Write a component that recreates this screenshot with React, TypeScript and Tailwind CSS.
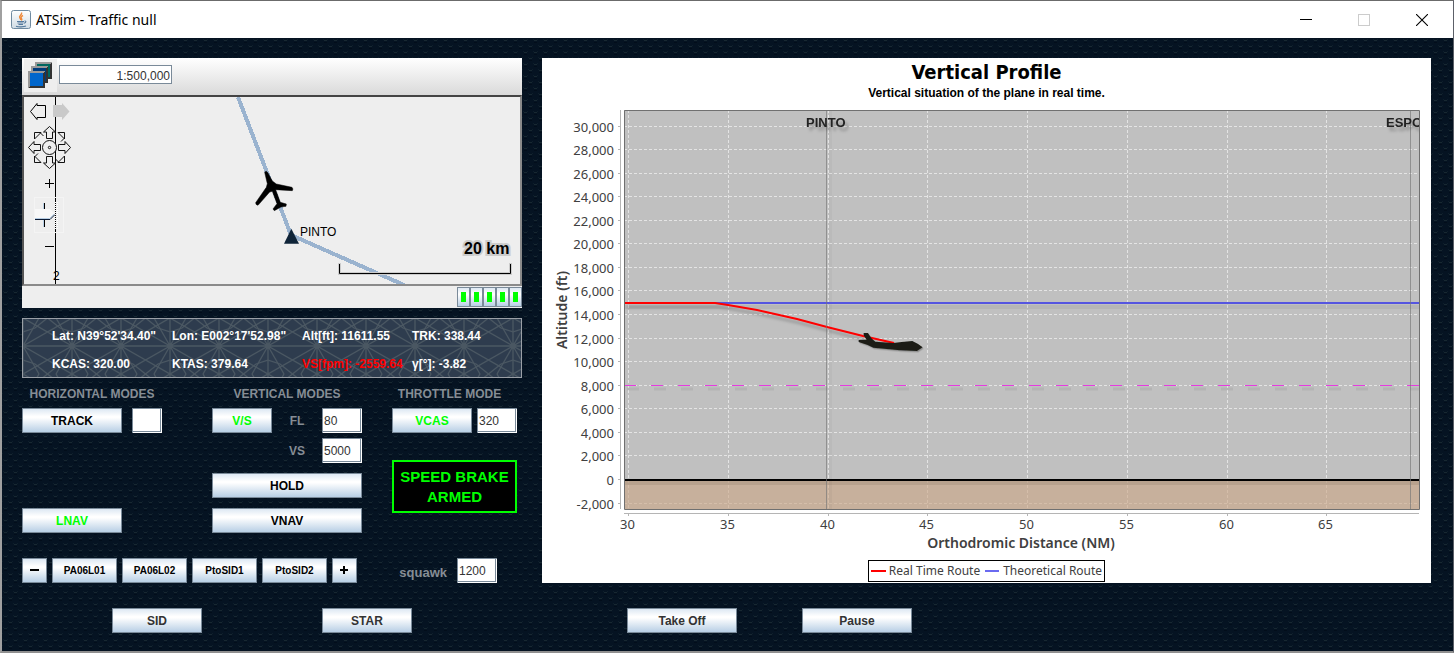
import React from "react";

const SANS = "'Noto Sans','DejaVu Sans Condensed',sans-serif";
const ARIAL = "'Liberation Sans',Arial,sans-serif";

function Texture() {
  return (
    <svg className="absolute inset-0 h-full w-full" aria-hidden="true">
      <defs>
        <pattern id="weave" width="10" height="12" patternUnits="userSpaceOnUse">
          <rect width="10" height="12" fill="#051322" />
          <path d="M1 2.5h1m3 0h1M6 8.5h1m3 0h1M0 8.5h1" stroke="#0d1e2b" />
          <path d="M2 3.5h3M7 9.5h3" stroke="#182831" />
          <path d="M2 5.5h3M7 11.5h3" stroke="#020d1a" />
        </pattern>
      </defs>
      <rect width="100%" height="100%" fill="url(#weave)" />
    </svg>
  );
}

function JavaIcon() {
  return (
    <svg width="20" height="20" viewBox="0 0 20 20" aria-hidden="true">
      <defs>
        <linearGradient id="javaBg" x1="0" y1="0" x2="0" y2="1">
          <stop offset="0" stopColor="#ffffff" />
          <stop offset="1" stopColor="#cfdbe4" />
        </linearGradient>
      </defs>
      <rect x="0.5" y="0.5" width="19" height="18" rx="2" fill="url(#javaBg)" stroke="#6f8aa0" />
      <path d="M10.500 2.500c1.200 2.200-3 3.400-1.800 5.200.5.8 1 1.200 1 2.300M12 5.500c-2 1-2.400 2-1.400 3.200.5.6.3 1.100-.3 1.800" fill="none" stroke="#ee8a3c" strokeWidth="1.400" />
      <path d="M6 11.500h7M6.500 13h6M7.500 14.500h4.500M13.500 11c2-.4 1.800 1.700-.5 2.200M5 16.300c2 .8 8 .8 10-.2" fill="none" stroke="#54799c" strokeWidth="1.100" />
    </svg>
  );
}

function TitleBar() {
  const control = "flex h-full w-[58px] items-center justify-center";
  return (
    <header className="relative flex h-[37px] items-center bg-white pl-[9px] pr-[2px]">
      <JavaIcon />
      <h1 className="ml-[5px] font-['Noto_Sans',sans-serif] text-[14px] leading-5 text-black">ATSim - Traffic null</h1>
      <div className="ml-auto flex h-full">
        <button type="button" aria-label="Minimize" className={control}>
          <svg width="12" height="12"><path d="M0 5.500h12" stroke="#000" /></svg>
        </button>
        <button type="button" aria-label="Maximize" disabled className={control}>
          <svg width="12" height="12"><rect x="0.5" y="0.5" width="11" height="11" fill="none" stroke="#ccc" /></svg>
        </button>
        <button type="button" aria-label="Close" className={control}>
          <svg width="12" height="12"><path d="M0 0l12 12M12 0L0 12" stroke="#000" strokeWidth="1.100" /></svg>
        </button>
      </div>
    </header>
  );
}

function Button({ className = "", children, ...rest }: React.ButtonHTMLAttributes<HTMLButtonElement>) {
  return (
    <button
      type="button"
      className={`h-[25px] border border-[#7a8a99] bg-[linear-gradient(180deg,#dde8f3_0%,#ffffff_32%,#ffffff_38%,#b8cfe5_100%)] text-center font-bold ${className}`}
      {...rest}
    >
      {children}
    </button>
  );
}

const fieldStyle =
  "h-[25px] border-l border-t border-[#7a8a99] bg-white px-px text-[12px] text-[#333] shadow-[inset_-1px_-1px_0_#fff,inset_-2px_-2px_0_#7a8a99] outline-none";

function Field({ id, label, value, className = "" }: { id?: string; label?: string; value: string; className?: string }) {
  return <input id={id} aria-label={label} defaultValue={value} className={`${fieldStyle} ${className}`} />;
}

function PanWheel() {
  const arrow = "M0 -21L6 -15.500H3V-9H-3V-15.500H-6Z";
  const corner = "M-15 -8.500V-15H-8.500ZM-9 -14.500L-6 -11.500";
  return (
    <g transform="translate(49.500 147.500)" fill="none" stroke="#111">
      {[0, 90, 180, 270].map((r) => (
        <g key={r} transform={`rotate(${r})`}>
          <path d={corner} />
          <path d={arrow} fill="#eee" />
        </g>
      ))}
      <circle r="7" fill="#eee" />
      <circle r="1.200" />
    </g>
  );
}

function MapCanvas() {
  return (
    <svg viewBox="24 97 496 187" className="block h-auto w-full bg-[#eee]" role="img" aria-label="Map of the route">
      <path d="M238 97L291 235L404 285" fill="none" stroke="#9ab3cf" strokeWidth="4" shapeRendering="crispEdges" />
      <path d="M55.500 97V284" stroke="#000" />
      <text x="53" y="280" fontFamily={ARIAL} fontSize="12">2</text>
      <path d="M30.500 111.500L37 103.500V105.500H45.500V117.500H37V119.500Z" fill="#eee" stroke="#000" />
      <path d="M53 105H62V103L69.500 111.500L62 120V117H53Z" fill="#c9c9c9" />
      <PanWheel />
      <path d="M45 183.500h9M49.500 179v9M45 246.500h9" stroke="#000" />
      <rect x="34.500" y="197.500" width="29" height="35" fill="none" stroke="#f4f4f4" />
      <path d="M43.500 203v24" stroke="#b8cfe5" />
      <path d="M44.500 203v24" stroke="#000" />
      <path d="M35 209H50L55 214L50 219H35Z" fill="#f8f8f8" />
      <path d="M35 218.500H49.500L54 214" fill="none" stroke="#b8cfe5" />
      <path d="M35 219.500H50L55 214.500" fill="none" stroke="#0b1a33" />
      <path d="M55.500 202V229M57.500 202V229" stroke="#fff" strokeDasharray="1 1" />
      <g transform="translate(220 90) scale(0.33333)">
        <path d="M134 247Q139 240 144 249L157 273L169 282L216 292Q221 297 217 302L167 299L181 337L199 342L198 349L183 351L163 362L159 357L171 341L157 304L149 306L114 346Q106 344 107 338L139 292L142 281Z" fill="#000" stroke="#000" strokeWidth="1.500" />
        <path d="M214 416L237 461H192Z" fill="#0f2438" />
      </g>
      <text x="300" y="236" fontFamily={ARIAL} fontSize="12">PINTO</text>
      <path d="M339.500 263V273.500H510.500V263" fill="none" stroke="#ccc" strokeWidth="3" />
      <path d="M339.500 264V273.500H510.500V264" fill="none" stroke="#000" />
      <text x="464" y="254" fontFamily={ARIAL} fontSize="16" fontWeight="bold" stroke="#ccc" strokeWidth="4" paintOrder="stroke">20 km</text>
    </svg>
  );
}

function MapPanel() {
  return (
    <section className="bg-[#eee]">
      <div className="flex h-[37px] items-start bg-[linear-gradient(180deg,#fff,#dadada)] pl-[2px] pt-px">
        <button type="button" aria-label="Layers" className="flex h-[33px] w-[33px] items-center justify-center bg-[#eee]">
          <svg width="27" height="27" viewBox="0 0 27 27" shapeRendering="crispEdges">
            {[
              [8, 0, "#00675f"],
              [4, 4, "#003b7a"],
              [1, 9, "#0066cc"],
            ].map(([x, y, c]) => (
              <g key={String(c)} transform={`translate(${x} ${y})`}>
                <rect width="17" height="17" fill="#333" />
                <path d="M0 0H17L15 2H2V15L0 17Z" fill="#999" />
                <rect x="2" y="2" width="13" height="13" fill={String(c)} />
              </g>
            ))}
          </svg>
        </button>
        <input
          aria-label="Scale"
          defaultValue="1:500,000"
          className="ml-[2px] mt-[6px] h-[19px] w-[113px] border border-[#7a8a99] bg-white pt-[2px] pr-px text-right text-[12px] text-[#333] outline-none"
        />
      </div>
      <div className="border-2 border-b-[#8a8a8a] border-l-[#555] border-r-[#8a8a8a] border-t-[#444]">
        <MapCanvas />
      </div>
      <div className="flex h-[22px] items-center justify-end">
        {[0, 1, 2, 3, 4].map((i) => (
          <span key={i} className="flex h-5 w-[13px] items-center justify-center border border-[#7a8a99] bg-[linear-gradient(180deg,#dde8f3,#fff_35%,#b8cfe5)]">
            <span className="h-[10px] w-[5px] bg-[#00ff00]" />
          </span>
        ))}
      </div>
    </section>
  );
}

function StarPattern() {
  return (
    <svg className="absolute inset-0 h-full w-full" aria-hidden="true">
      <defs>
        <pattern id="stars" width="49" height="56" patternUnits="userSpaceOnUse" y="-1">
          <rect width="49" height="56" fill="#2e3c4e" />
          <g stroke="#4a5762" strokeWidth="1.300" fill="none">
            <path d="M0 28H49M0 0V56M49 0V56M0 28L49 0M0 28L49 56M49 28L0 0M49 28L0 56M0 28L16 0M0 28L16 56M49 28L33 0M49 28L33 56M0 28L24.500 14L49 28L24.500 42ZM0 0L24.500 14L49 0M0 56L24.500 42L49 56" />
            <path d="M0 14L12 10L24.500 0L37 10L49 14M0 42L12 46L24.500 56L37 46L49 42" />
            <circle cx="0" cy="28" r="2" fill="#4a5762" />
            <circle cx="49" cy="28" r="2" fill="#4a5762" />
          </g>
        </pattern>
      </defs>
      <rect width="100%" height="100%" fill="url(#stars)" />
    </svg>
  );
}

function FlightData() {
  return (
    <section className="relative mt-[10px] h-[60px] border border-[#9a9fa6]">
      <StarPattern />
      <div className="relative grid grid-cols-[120px_130px_110px_1fr] pl-[29px] pt-[3px] text-[12px] font-bold leading-[28px] whitespace-nowrap text-white">
        <span>Lat: N39°52'34.40"</span>
        <span>Lon: E002°17'52.98"</span>
        <span>Alt[ft]: 11611.55</span>
        <span>TRK: 338.44</span>
        <span>KCAS: 320.00</span>
        <span>KTAS: 379.64</span>
        <span className="text-[#ff0000]">VS[fpm]: -2559.64</span>
        <span>γ[°]: -3.82</span>
      </div>
    </section>
  );
}

function Modes() {
  const heading = "pt-[2px] text-center text-[12px] font-bold leading-7 text-[#868d95]";
  const caption = "flex-1 text-center text-[12px] font-bold text-[#868d95]";
  return (
    <section className="grid grid-cols-[190px_180px_1fr]">
      <div className="flex w-[140px] flex-col">
        <h2 className={heading}>HORIZONTAL MODES</h2>
        <div className="flex gap-[10px]">
          <Button className="w-[100px] text-[12px] text-black">TRACK</Button>
          <Field label="Track" value="" className="w-[30px]" />
        </div>
        <Button className="mt-auto w-[100px] text-[12px] text-[#00ff00]">LNAV</Button>
      </div>
      <div className="flex w-[150px] flex-col">
        <h2 className={heading}>VERTICAL MODES</h2>
        <div className="flex items-center">
          <Button className="w-[60px] text-[12px] text-[#00ff00]">V/S</Button>
          <label htmlFor="fl" className={caption}>FL</label>
          <Field id="fl" value="80" className="w-10" />
        </div>
        <div className="mt-[5px] flex items-center pl-[60px]">
          <label htmlFor="vs" className={caption}>VS</label>
          <Field id="vs" value="5000" className="w-10" />
        </div>
        <Button className="mt-[10px] text-[12px] text-black">HOLD</Button>
        <Button className="mt-[10px] text-[12px] text-black">VNAV</Button>
      </div>
      <div className="w-[125px]">
        <h2 className={`${heading} pr-[10px]`}>THROTTLE MODE</h2>
        <div className="flex gap-[5px]">
          <Button className="w-20 text-[12px] text-[#00ff00]">VCAS</Button>
          <Field label="VCAS" value="320" className="w-10" />
        </div>
        <p className="mt-[27px] border-2 border-[#00ff00] bg-black pt-[5px] pb-1 text-center text-[15px] font-bold leading-5 whitespace-nowrap text-[#00ff00]">
          SPEED BRAKE
          <br />
          ARMED
        </p>
      </div>
    </section>
  );
}

function Procedures() {
  return (
    <div className="mt-[25px] flex items-center gap-[5px]">
      <Button aria-label="Previous" className="w-[25px] text-black">
        <svg className="mx-auto" width="9" height="9"><path d="M0 4h9" stroke="#000" strokeWidth="2" /></svg>
      </Button>
      {["PA06L01", "PA06L02", "PtoSID1", "PtoSID2"].map((n) => (
        <Button key={n} className="w-[65px] text-[10px] text-black">{n}</Button>
      ))}
      <Button aria-label="Next" className="w-[25px] text-black">
        <svg className="mx-auto" width="9" height="9"><path d="M0 4h8M4 0v8" stroke="#000" strokeWidth="2" /></svg>
      </Button>
      <label htmlFor="squawk" className="ml-auto pt-[5px] pr-[5px] text-[13px] font-bold leading-5 text-[#868d95]">squawk</label>
      <Field id="squawk" value="1200" className="mr-[25px] w-10" />
    </div>
  );
}

const LEFT = 624;
const RIGHT = 1419;
const TOP = 110;
const BOTTOM = 509;
const yOf = (alt: number) => Math.round(480 - (alt * 353.5) / 30000) - 0.5;
const xOf = (nm: number) => Math.round(628 + (nm - 30) * 19.95) + 0.5;
const altitudes = Array.from({ length: 17 }, (_, i) => -2000 + i * 2000);
const distances = [30, 35, 40, 45, 50, 55, 60, 65];

function ProfileChart() {
  return (
    <svg viewBox="542 101 889 454" className="block h-auto w-full" role="img" aria-label="Altitude against distance" fontFamily={SANS}>
      <defs>
        <clipPath id="plot"><rect x={LEFT} y={TOP} width={RIGHT - LEFT} height={BOTTOM - TOP} /></clipPath>
        <filter id="soft" x="-5%" y="-50%" width="110%" height="250%">
          <feDropShadow dx="3" dy="4" stdDeviation="1.500" floodColor="#000" floodOpacity="0.25" />
        </filter>
      </defs>
      <rect x={LEFT} y={TOP} width={RIGHT - LEFT} height={BOTTOM - TOP} fill="#c0c0c0" />
      <g clipPath="url(#plot)">
        <g stroke="#e4e4e4" strokeDasharray="3 2">
          {altitudes.map((a) => <path key={a} d={`M${LEFT} ${yOf(a)}H${RIGHT}`} />)}
          {distances.map((d) => <path key={d} d={`M${xOf(d)} ${TOP}V${BOTTOM}`} />)}
        </g>
        <rect x={LEFT} y="480" width={RIGHT - LEFT} height="29" fill="#cca583" opacity="0.6" />
        <rect x={LEFT} y="481" width={RIGHT - LEFT} height="4" fill="#8b7765" opacity="0.25" />
        <rect x="829" y={TOP} width="3" height={BOTTOM - TOP} fill="#000" opacity="0.03" />
        <rect x={LEFT} y="305" width={RIGHT - LEFT} height="4" fill="#000" opacity="0.05" />
        <path d={`M${LEFT} 385.500H${RIGHT}`} stroke="#e63ce0" strokeDasharray="12 15" />
        <path d={`M${LEFT + 3} 389H${RIGHT}`} stroke="#000" strokeOpacity="0.06" strokeWidth="3" strokeDasharray="12 15" />
        <path d={`M${LEFT} 303H${RIGHT}`} stroke="#5555e0" strokeWidth="2" />
        <path d={`M${LEFT} 303H715L728 305L757 310L797 319L827 327L863 336L894 343`} fill="none" stroke="#f00" strokeWidth="2" filter="url(#soft)" />
        <path d={`M${LEFT} 480H${RIGHT}`} stroke="#000" strokeWidth="2" />
        <path d={`M826.500 ${TOP}V${BOTTOM}M1410.500 ${TOP}V${BOTTOM}`} stroke="#777" strokeOpacity="0.65" />
        <g fontFamily={ARIAL} fontSize="13" fontWeight="bold" fill="#222" filter="url(#soft)">
          <text x="806" y="127">PINTO</text>
          <text x="1386" y="127">ESPOR</text>
        </g>
      </g>
      <g transform="translate(540 240) scale(0.33333)" filter="url(#soft)">
        <path d="M971 279H984L994 295L1006 305L1060 309L1085 306L1117 303L1133 311L1148 322L1131 333L1080 331L1000 323L983 315L956 306V300L980 299L971 286Z" fill="#1c1e17" />
      </g>
      <path d={`M${LEFT}.500 ${BOTTOM}.500V${TOP}.500H${RIGHT}.500V${BOTTOM}.500Z`} fill="none" stroke="#707070" />
      <path d={`M620.500 ${TOP}V${BOTTOM}M${LEFT} 513.500H${RIGHT}`} stroke="#b5b5b5" />
      <g stroke="#b5b5b5">
        {altitudes.map((a) => <path key={a} d={`M618 ${yOf(a)}H621`} />)}
        {distances.map((d) => <path key={d} d={`M${xOf(d)} 513V516`} />)}
      </g>
      <g fontSize="13" fill="#404040">
        {altitudes.map((a) => (
          <text key={a} x="614" y={yOf(a) + 5} textAnchor="end">{a.toLocaleString("en-US")}</text>
        ))}
        {distances.map((d) => (
          <text key={d} x={xOf(d) - 1} y="529" textAnchor="middle">{d}</text>
        ))}
      </g>
      <g fontSize="14" fontWeight="600" fill="#404040" textAnchor="middle">
        <text x="1021" y="548">Orthodromic Distance (NM)</text>
        <text transform="translate(567 310) rotate(-90)">Altitude (ft)</text>
      </g>
    </svg>
  );
}

function ProfilePanel() {
  return (
    <section className="flex flex-col bg-white pb-px">
      <h2 className="text-center font-['DejaVu_Sans_Condensed','Noto_Sans',sans-serif] text-[20px] font-bold leading-7 text-black">Vertical Profile</h2>
      <p className="text-center text-[12px] font-bold leading-[15px] text-black">Vertical situation of the plane in real time.</p>
      <ProfileChart />
      <ul className="mx-auto mt-[5px] flex items-center gap-[5px] border border-black px-[2px] font-['Noto_Sans',sans-serif] text-[12px] leading-5 text-[#404040]">
        <li className="flex items-center gap-[3px]">
          <span className="h-[2px] w-[15px] bg-[#ff0000]" />
          Real Time Route
        </li>
        <li className="flex items-center gap-1">
          <span className="h-[2px] w-[14px] bg-[#6a6af0]" />
          Theoretical Route
        </li>
      </ul>
    </section>
  );
}

export default function App() {
  return (
    <div className="relative flex min-h-screen flex-col border-b-2 border-l-2 border-r border-t border-b-[#8f8f8f] border-l-[#a0a0a0] border-r-[#5c6068] border-t-[#6b6b6b] bg-[#051322] font-['Liberation_Sans',Arial,sans-serif]">
      <Texture />
      <TitleBar />
      <main className="relative flex flex-1 gap-5 pt-5 pr-[22px] pb-[18px] pl-5">
        <div className="w-[500px] shrink-0">
          <MapPanel />
          <FlightData />
          <Modes />
          <Procedures />
          <div className="mt-[25px] flex gap-[120px] pl-[90px]">
            <Button className="w-[90px] text-[12px] text-[#333]">SID</Button>
            <Button className="w-[90px] text-[12px] text-[#333]">STAR</Button>
          </div>
        </div>
        <div className="min-w-0 flex-1">
          <ProfilePanel />
          <div className="mt-[25px] flex gap-[65px] pl-[85px]">
            <Button className="w-[110px] text-[12px] text-[#333]">Take Off</Button>
            <Button className="w-[110px] text-[12px] text-[#333]">Pause</Button>
          </div>
        </div>
      </main>
    </div>
  );
}
